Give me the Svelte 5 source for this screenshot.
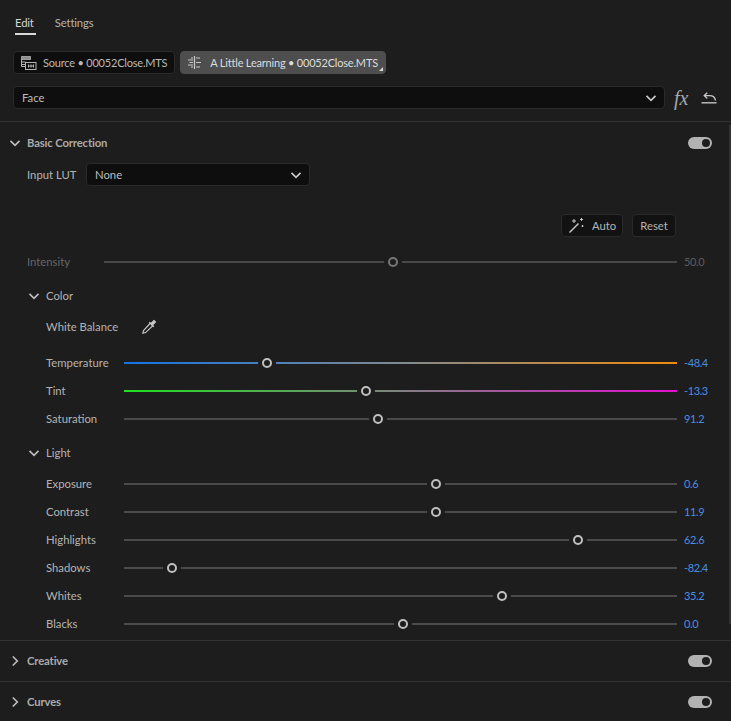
<script lang="ts">
  interface Slider {
    name: string;
    pos: number;
    value: string;
    kind?: string;
  }

  const colorSliders: Slider[] = [
    { name: 'Temperature', pos: 142.5, value: '-48.4', kind: 'temp' },
    { name: 'Tint', pos: 241.5, value: '-13.3', kind: 'tint' },
    { name: 'Saturation', pos: 253.5, value: '91.2' },
  ];

  const lightSliders: Slider[] = [
    { name: 'Exposure', pos: 312, value: '0.6' },
    { name: 'Contrast', pos: 311.5, value: '11.9' },
    { name: 'Highlights', pos: 454, value: '62.6' },
    { name: 'Shadows', pos: 47.5, value: '-82.4' },
    { name: 'Whites', pos: 377.5, value: '35.2' },
    { name: 'Blacks', pos: 278.5, value: '0.0' },
  ];
</script>

{#snippet chevron(open: boolean)}
  <svg class="chev" width="12" height="12" viewBox="0 0 12 12" fill="none" stroke="currentColor" stroke-width="1.7">
    {#if open}
      <path d="M1.500 3.800 6 8.300l4.500-4.500" />
    {:else}
      <path d="M3.800 1.500 8.300 6l-4.500 4.500" />
    {/if}
  </svg>
{/snippet}

{#snippet toggle()}
  <span class="toggle"><span class="knob"></span></span>
{/snippet}

{#snippet sliderRow(s: Slider)}
  <div class="slider-row">
    <span class="label">{s.name}</span>
    <div class="track {s.kind ?? ''}">
      <span class="thumb" style="left:{s.pos}px"></span>
    </div>
    <span class="value">{s.value}</span>
  </div>
{/snippet}

<div class="panel">
  <nav class="tabs">
    <span class="tab active">Edit</span>
    <span class="tab">Settings</span>
  </nav>

  <div class="chips">
    <div class="chip">
      <svg width="17" height="16" viewBox="0 0 17 16" fill="none" stroke="#b4b4b4" stroke-width="1">
        <path d="M1.500 1.500h9v3M1.500 1.500v10h4" />
        <path d="M1.500 4.500h9M1.500 7h4M1.500 9.500h4" />
        <rect x="1.500" y="1.500" width="9" height="3" fill="#8c8c8c" stroke="none" />
        <rect x="5.500" y="7.500" width="10.500" height="7" fill="#0e0e0e" />
        <path d="M8 11h6M8.500 9.500v3M11 9.500v3M13.500 9.500v3" />
      </svg>
      <span>Source • 00052Close.MTS</span>
    </div>
    <div class="chip current">
      <svg width="15" height="15" viewBox="0 0 15 15" fill="none" stroke="#c8c8c8" stroke-width="1.200">
        <path d="M7.500 1v13" />
        <path d="M9 3h4M9 7.500h5M9 12h4M1 5h5M2.500 7.500h3.500M1 10h5M4 3h2M4 12h2" />
      </svg>
      <span>A Little Learning • 00052Close.MTS</span>
      <span class="corner"></span>
    </div>
  </div>

  <div class="effect-row">
    <div class="select wide">
      <span>Face</span>
      {@render chevron(true)}
    </div>
    <span class="fx">fx</span>
    <svg class="undo" width="16" height="12" viewBox="0 0 16 12" fill="none" stroke="#c4c4c4" stroke-width="1.400">
      <path d="M0.500 10.800h15" />
      <path d="M14.500 8.500C14 5.200 11.500 3.600 8.500 3.600H3.500" />
      <path d="M6.300 0.800 3.300 3.600l3 2.800" />
    </svg>
  </div>

  <section class="section open">
    <header class="section-head">
      {@render chevron(true)}
      <span class="title">Basic Correction</span>
      {@render toggle()}
    </header>

    <div class="lut-row">
      <span class="label">Input LUT</span>
      <div class="select lut">
        <span>None</span>
        {@render chevron(true)}
      </div>
    </div>

    <div class="actions">
      <button class="btn auto">
        <svg width="17" height="17" viewBox="0 0 17 17" fill="none" stroke="#c8c8c8" stroke-width="1.500">
          <path d="M1.500 15.500 10.500 6.500" />
          <path d="M6 2v4M4 4h4M13.500 1v3M12 2.500h3M14.500 8v2M13.500 9h2" stroke-width="1" />
        </svg>
        Auto
      </button>
      <button class="btn reset">Reset</button>
    </div>

    <div class="slider-row intensity">
      <span class="label">Intensity</span>
      <div class="track">
        <span class="thumb" style="left:288.500px"></span>
      </div>
      <span class="value">50.0</span>
    </div>

    <div class="sub-head color-head">
      {@render chevron(true)}
      <span class="sub-title">Color</span>
    </div>

    <div class="wb-row">
      <span class="label">White Balance</span>
      <svg width="18" height="18" viewBox="0 0 18 18" fill="none" stroke="#c8c8c8" stroke-width="1.100">
        <path d="M10.500 5 3.500 12.500 2.800 15.300 5.600 14.600 13 7.500" />
        <path d="M9.300 4.200 13.800 8.700" stroke-width="1.500" />
        <path d="M11 5.500 14 2.500 15.500 4 12.500 7Z" fill="#c8c8c8" />
      </svg>
    </div>

    <div class="sliders">
      {#each colorSliders as s}
        {@render sliderRow(s)}
      {/each}
    </div>

    <div class="sub-head light-head">
      {@render chevron(true)}
      <span class="sub-title">Light</span>
    </div>

    <div class="sliders">
      {#each lightSliders as s}
        {@render sliderRow(s)}
      {/each}
    </div>
  </section>

  <section class="section closed">
    <header class="section-head">
      {@render chevron(false)}
      <span class="title">Creative</span>
      {@render toggle()}
    </header>
  </section>

  <section class="section closed last">
    <header class="section-head">
      {@render chevron(false)}
      <span class="title">Curves</span>
      {@render toggle()}
    </header>
  </section>

  <div class="scrollbar"></div>
</div>

<style>
  :global(body) {
    margin: 0;
    background: #1d1d1d;
  }

  .panel {
    position: relative;
    width: 731px;
    height: 721px;
    overflow: hidden;
    box-sizing: border-box;
    background: #1d1d1d;
    color: #b4b4b4;
    font-family: Lato, "Open Sans", sans-serif;
    font-size: 11.300px;
    line-height: 16px;
  }

  .scrollbar {
    position: absolute;
    top: 125px;
    right: 0;
    width: 2px;
    height: 499px;
    background: #333;
  }

  .tabs {
    display: flex;
    gap: 19px;
    padding: 15px 0 0 15px;
    height: 18px;
  }

  .tab {
    height: 18px;
    line-height: 16px;
    letter-spacing: -0.150px;
  }

  .tab.active {
    padding-right: 2px;
    color: #d4d4d4;
    border-bottom: 2px solid #d8d8d8;
  }

  .chips {
    display: flex;
    gap: 5px;
    padding: 18px 0 0 13px;
  }

  .chip {
    position: relative;
    display: flex;
    align-items: center;
    gap: 6px;
    height: 23px;
    padding: 0 7px 0 6px;
    box-sizing: border-box;
    background: #0e0e0e;
    border: 1px solid #2a2a2a;
    border-radius: 4px;
    color: #b9b9b9;
    font-size: 11px;
    letter-spacing: -0.200px;
  }

  .chip.current {
    gap: 8px;
    background: #4e4e4e;
    border-color: #4e4e4e;
    color: #dcdcdc;
  }

  .corner {
    position: absolute;
    right: 2px;
    bottom: 2px;
    width: 0;
    height: 0;
    border-left: 4px solid transparent;
    border-bottom: 4px solid #d8d8d8;
  }

  .effect-row {
    display: flex;
    align-items: center;
    padding: 12px 0 12px 13px;
    border-bottom: 1px solid #333;
  }

  .select {
    display: flex;
    align-items: center;
    justify-content: space-between;
    box-sizing: border-box;
    background: #0e0e0e;
    border: 1px solid #2a2a2a;
    border-radius: 4px;
    color: #bcbcbc;
  }

  .select .chev {
    color: #c8c8c8;
  }

  .wide {
    width: 652px;
    height: 23px;
    padding: 0 7px 0 8px;
  }

  .fx {
    margin-left: 9px;
    width: 18px;
    font-family: "Liberation Serif", serif;
    font-style: italic;
    font-size: 20px;
    color: #a8a8a8;
  }

  .undo {
    margin-left: 9px;
  }

  .section-head {
    display: flex;
    align-items: center;
    height: 40px;
    padding: 0 19px 0 9px;
  }

  .open {
    padding-bottom: 2px;
  }

  .open .section-head {
    height: 41px;
  }

  .closed {
    border-top: 1px solid #333;
  }

  .last {
    border-bottom: 1px solid #333;
  }

  .section-head .chev {
    color: #bcbcbc;
    margin-right: 6px;
  }

  .title {
    flex: 1;
    font-weight: 700;
    color: #aaa;
    letter-spacing: -0.150px;
  }

  .toggle {
    display: flex;
    align-items: center;
    justify-content: flex-end;
    box-sizing: border-box;
    width: 24px;
    height: 12px;
    padding-right: 2px;
    border-radius: 6px;
    background: #b2b2b2;
  }

  .knob {
    width: 8px;
    height: 8px;
    border-radius: 50%;
    background: #1d1d1d;
  }

  .lut-row {
    display: flex;
    align-items: center;
    padding-left: 27px;
  }

  .lut-row .label {
    width: 59px;
  }

  .lut {
    width: 224px;
    height: 23px;
    padding: 0 7px 0 8px;
  }

  .actions {
    display: flex;
    justify-content: flex-end;
    gap: 9px;
    padding: 28px 55px 0 0;
  }

  .btn {
    display: flex;
    align-items: center;
    justify-content: center;
    height: 23px;
    padding: 0;
    background: #121212;
    border: 1px solid #2a2a2a;
    border-radius: 4px;
    color: #b4b4b4;
    font: inherit;
  }

  .auto {
    gap: 7px;
    width: 62px;
  }

  .reset {
    width: 44px;
  }

  .slider-row {
    display: flex;
    align-items: center;
    height: 28px;
    padding-left: 46px;
  }

  .slider-row .label {
    width: 78px;
  }

  .track {
    position: relative;
    width: 553px;
    height: 2px;
    background: #4a4a4a;
  }

  .track.temp {
    background: linear-gradient(90deg, #1473e6, #808a90 50%, #f08a10);
  }

  .track.tint {
    background: linear-gradient(90deg, #20e020, #808080 50%, #e010d0);
  }

  .thumb {
    position: absolute;
    top: 1px;
    width: 6px;
    height: 6px;
    border: 2px solid #c0c0c0;
    border-radius: 50%;
    background: #1d1d1d;
    box-shadow: 0 0 0 4px #1d1d1d;
    transform: translate(-5px, -5px);
  }

  .value {
    margin-left: 7px;
    color: #4a8ee0;
    font-size: 11px;
    letter-spacing: -0.400px;
  }

  .intensity {
    height: 24px;
    margin-top: 13px;
    padding-left: 27px;
  }

  .intensity .label {
    width: 77px;
    color: #666;
  }

  .intensity .track {
    width: 573px;
    background: #484848;
  }

  .intensity .thumb {
    border-color: #777;
  }

  .intensity .value {
    color: #5c5c5c;
  }

  .sub-head {
    display: flex;
    align-items: center;
    gap: 6px;
    padding-left: 28px;
    height: 20px;
  }

  .sub-head .chev {
    color: #bcbcbc;
  }

  .color-head {
    margin-top: 12px;
  }

  .light-head {
    margin-top: 10px;
    margin-bottom: 7px;
  }

  .wb-row {
    display: flex;
    align-items: center;
    height: 20px;
    margin-top: 11px;
    margin-bottom: 12px;
    padding-left: 46px;
  }

  .wb-row .label {
    width: 94px;
  }
</style>
